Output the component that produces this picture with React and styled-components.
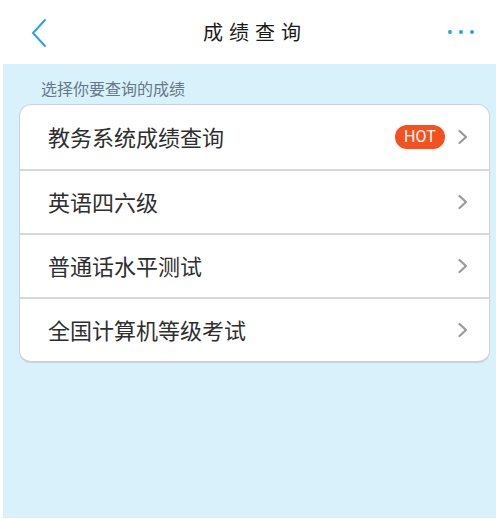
import React from "react";
import styled, { createGlobalStyle } from "styled-components";

const Global = createGlobalStyle`
  html, body { margin: 0; padding: 0; background: #ffffff; }
  body { font-family: "Noto Sans CJK SC", "Noto Sans", sans-serif; }
  * { box-sizing: border-box; }
`;

const Page = styled.div`
  width: 496px;
  height: 519px;
  display: flex;
  flex-direction: column;
  background: #ffffff;
`;

const Header = styled.header`
  height: 64px;
  flex: none;
  display: grid;
  grid-template-columns: 80px 1fr 80px;
  align-items: center;
`;

const BackBtn = styled.div`
  display: flex;
  align-items: center;
  padding-left: 30px;
  padding-top: 2px;
`;

const Title = styled.h1`
  margin: 0;
  text-align: center;
  font-size: 20px;
  font-weight: 400;
  letter-spacing: 6px;
  color: #1a1a1a;
  padding-left: 14px;
  padding-bottom: 2px;
`;

const MoreBtn = styled.div`
  display: flex;
  justify-content: flex-end;
  align-items: center;
  gap: 7px;
  padding-right: 22px;
`;

const Dot = styled.span`
  width: 4px;
  height: 4px;
  border-radius: 50%;
  background: #2aa3de;
`;

const Body = styled.main`
  flex: 1;
  margin: 0 0 1px 3px;
  background: #d9f1fb;
  padding: 13px 6px 0 16px;
`;

const SectionLabel = styled.div`
  font-size: 16px;
  color: #66778a;
  line-height: 22px;
  padding-left: 22px;
  margin-bottom: 5px;
`;

const Card = styled.ul`
  list-style: none;
  margin: 0;
  padding: 0;
  background: #ffffff;
  border: 1px solid #cdd2d6;
  border-bottom-width: 2px;
  border-radius: 12px;
  overflow: hidden;
`;

const Row = styled.li`
  height: 64px;
  display: flex;
  align-items: center;
  padding: 0 20px 3px 28px;
  border-top: ${(p) => (p.$first ? "none" : "2px solid #d6d9dc")};
`;

const RowText = styled.span`
  flex: 1;
  font-size: 22px;
  color: #2e2e2e;
`;

const Hot = styled.span`
  width: 50px;
  height: 24px;
  border-radius: 12px;
  background: #f4511e;
  color: #ffffff;
  font-family: "Roboto", "Liberation Sans", sans-serif;
  font-size: 16px;
  line-height: 24px;
  text-align: center;
  margin-right: 12px;
  margin-top: 3px;
`;

const ChevronBox = styled.span`
  display: flex;
  margin-top: 3px;
`;

const Chevron = () => (
  <ChevronBox>
    <svg width="12" height="16" viewBox="0 0 12 16">
      <path d="M2.5 2 L9 8 L2.5 14" fill="none" stroke="#9a9a9a" strokeWidth="2.2" strokeLinecap="round" strokeLinejoin="round" />
    </svg>
  </ChevronBox>
);

const items = [
  { text: "教务系统成绩查询", hot: true },
  { text: "英语四六级" },
  { text: "普通话水平测试" },
  { text: "全国计算机等级考试" },
];

export default function App() {
  return (
    <>
      <Global />
      <Page>
        <Header>
          <BackBtn>
            <svg width="18" height="30" viewBox="0 0 18 30">
              <path d="M15 2 L3 15 L15 28" fill="none" stroke="#2aa3de" strokeWidth="2" strokeLinecap="round" strokeLinejoin="round" />
            </svg>
          </BackBtn>
          <Title>成绩查询</Title>
          <MoreBtn>
            <Dot />
            <Dot />
            <Dot />
          </MoreBtn>
        </Header>
        <Body>
          <SectionLabel>选择你要查询的成绩</SectionLabel>
          <Card>
            {items.map((it, i) => (
              <Row key={it.text} $first={i === 0}>
                <RowText>{it.text}</RowText>
                {it.hot && <Hot>HOT</Hot>}
                <Chevron />
              </Row>
            ))}
          </Card>
        </Body>
      </Page>
    </>
  );
}
